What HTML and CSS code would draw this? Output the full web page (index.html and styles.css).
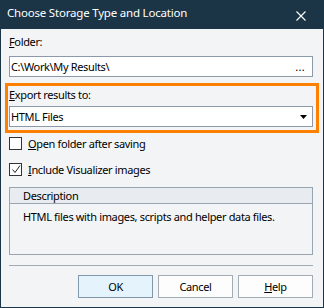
FILE: index.html
```html
<!DOCTYPE html>
<html>
<head>
<meta charset="utf-8">
<link rel="stylesheet" href="styles.css">
</head>
<body>
<div class="window">
  <div class="titlebar">
    <span class="title">Choose Storage Type and Location</span>
    <svg class="close" width="10" height="10" viewBox="0 0 10 10"><path d="M0.5 0.5 L9.5 9.5 M9.5 0.5 L0.5 9.5" stroke="#fff" stroke-width="1.1" fill="none"/></svg>
  </div>
  <div class="content">
    <div class="label"><u>F</u>older:</div>
    <div class="field"><span class="value">C:\Work\My Results\</span><span class="dots">...</span></div>
    <div class="highlight">
      <div class="label"><u>E</u>xport results to:</div>
      <div class="field select"><span class="value">HTML Files</span>
        <svg class="arrow" width="7" height="4" viewBox="0 0 7 4"><path d="M0 0 H7 L3.5 4 Z" fill="#000"/></svg>
      </div>
    </div>
    <div class="check first"><span class="box"></span><span><u>O</u>pen folder after saving</span></div>
    <div class="check second"><span class="box"><svg width="11" height="11" viewBox="0 0 11 11"><path d="M2.5 5.5 L5 8.5 L10 1.5" stroke="#222" stroke-width="1" fill="none"/></svg></span><span><u>I</u>nclude Visualizer images</span></div>
    <div class="desc">
      <div class="desc-head">Description</div>
      <div class="desc-body">HTML files with images, scripts and helper data files.</div>
    </div>
    <div class="sep"></div>
    <div class="buttons">
      <div class="btn default">OK</div>
      <div class="btn">Cancel</div>
      <div class="btn"><u>H</u>elp</div>
    </div>
  </div>
</div>
</body>
</html>
```
FILE: styles.css
```css
* { box-sizing: border-box; }
body {
  margin: 0;
  font-family: "Segoe UI", "Noto Sans", sans-serif;
  font-size: 11px;
  letter-spacing: -0.35px;
  color: #000;
}
.window {
  width: 324px;
  height: 308px;
  background: #f3f4f6;
  border: 1px solid #1b3547;
  border-top: 0;
  display: flex;
  flex-direction: column;
}
.titlebar {
  height: 29px;
  background: #1b3547;
  color: #fff;
  display: flex;
  align-items: flex-start;
  padding: 5px 17px 0 6px;
}
.title {
  line-height: 16px;
  font-size: 11.5px;
  letter-spacing: -0.2px;
}
.close { margin-left: auto; margin-top: 6px; }
.content {
  padding: 5px 10px 0 8px;
  display: flex;
  flex-direction: column;
}
.label { line-height: 16px; height: 16px; }
.field {
  margin-top: 6px;
  height: 21px;
  border: 1px solid #8c99a8;
  background: #fff;
  display: flex;
  align-items: center;
  padding: 0 7px 0 1px;
  line-height: 16px;
}
.dots { margin-left: auto; letter-spacing: 0.3px; }
.highlight {
  margin: 6px -6px 0 -4px;
  border: 3px solid #ff7f00;
  padding: 1px 3px 3px 1px;
}
.highlight .field.select { margin-top: 3px; padding-right: 5px; }
.arrow { margin-left: auto; }
.check {
  height: 17px;
  display: flex;
  align-items: center;
  line-height: 16px;
}
.check.first { margin-top: 2px; }
.check.second { margin-top: 9px; }
.box {
  width: 13px;
  height: 13px;
  border: 1px solid #333;
  background: #fff;
  margin-right: 6px;
  display: flex;
}
.desc {
  margin-top: 9px;
  height: 68px;
  border: 1px solid #9aa5b2;
}
.desc-head {
  height: 16px;
  background: #e8ebef;
  border-bottom: 1px solid #9aa5b2;
  line-height: 15px;
  padding-left: 13px;
}
.desc-body {
  padding: 5px 0 0 13px;
  line-height: 16px;
}
.sep {
  margin-top: 10px;
  height: 1px;
  background: #a2aab5;
}
.buttons {
  margin-top: 9px;
  display: flex;
  justify-content: flex-end;
  gap: 5px;
}
.btn {
  width: 75px;
  height: 23px;
  border: 1px solid #a3abb5;
  background: #fdfdfd;
  display: flex;
  align-items: center;
  justify-content: center;
  line-height: 16px;
}
.btn.default {
  background: #e5f4fc;
  border-color: #8397aa;
}
```
